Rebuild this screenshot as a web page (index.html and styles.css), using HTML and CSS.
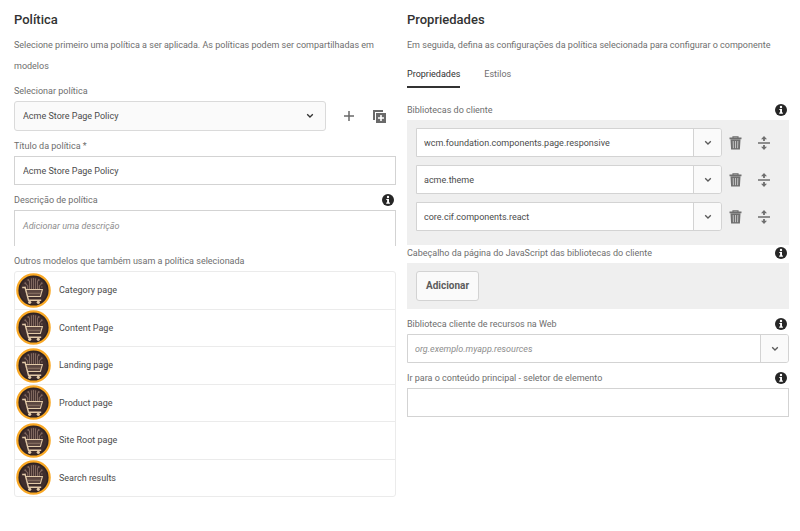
FILE: index.html
```html
<!DOCTYPE html>
<html lang="pt-BR">
<head>
<meta charset="utf-8">
<meta name="viewport" content="width=device-width, initial-scale=1">
<title>Política</title>
<link rel="stylesheet" href="styles.css">
</head>
<body>
<svg class="sprite" aria-hidden="true">
  <symbol id="chevron" viewBox="0 0 8 6"><path d="M1.200 1.200 4 4l2.800-2.800" fill="none" stroke="currentColor" stroke-width="1.300"/></symbol>
  <symbol id="info" viewBox="0 0 12 12"><circle cx="6" cy="6" r="6" fill="#262626"/><circle cx="6" cy="3" r="1.200" fill="#fff"/><path d="M4.300 4.900h2.700v3.600h.9v1.200H4.200V8.500h.9V6.100h-.8z" fill="#fff"/></symbol>
  <symbol id="plus" viewBox="0 0 10 10"><path d="M5 0v10M0 5h10" stroke="currentColor" stroke-width="1.500"/></symbol>
  <symbol id="duplicate" viewBox="0 0 13 13"><path d="M0 0h10v2H2v8H0z" fill="currentColor"/><path d="M3 3h10v10H3z" fill="currentColor"/><path d="M8 5v6M5 8h6" stroke="#fff" stroke-width="1.600"/></symbol>
  <symbol id="trash" viewBox="0 0 13 14"><path d="M4 2V.8h5V2" fill="none" stroke="currentColor" stroke-width="1.200"/><path d="M.5 1.600h12v1.600H.5zM1.500 3.600h10l-.6 10H2.100z" fill="currentColor"/><path d="M4.200 5l.2 7.200M6.500 5v7.200M8.800 5l-.2 7.200" stroke="#d8d8d8" stroke-width=".8"/></symbol>
  <symbol id="move" viewBox="0 0 12 14"><path d="M0 6.200h12v1.600H0zM6 0l3 3.200H6.900V5H5.100V3.200H3zM6 14l3-3.200H6.900V9H5.100v1.800H3z" fill="currentColor"/></symbol>
  <symbol id="cart" viewBox="0 0 35 35">
    <circle cx="17.500" cy="17.500" r="16.200" fill="#2f2324" stroke="#f9a825" stroke-width="2.200"/>
    <circle cx="17.500" cy="17.500" r="13.500" fill="#3e2d2c"/>
    <g fill="none" stroke="#80685f" stroke-width="1.100">
      <path d="M17.500 16V5M15.500 16V6M19.500 16V6M13.500 16V8.500l-1-1.500M21.500 16V8.500l1-1.500M11.700 16v-3L9.500 10.500M23.300 16v-3l2.200-2.500M10 14H8.500M25 14h1.500"/>
    </g>
    <g fill="#80685f"><circle cx="12.300" cy="7" r="1"/><circle cx="22.700" cy="7" r="1"/><circle cx="9.300" cy="10.300" r="1"/><circle cx="25.700" cy="10.300" r="1"/><circle cx="15.500" cy="6" r=".8"/><circle cx="19.500" cy="6" r=".8"/></g>
    <path d="M10 16.500h16l-1.800 6.500H11.600z" fill="#5b4640"/>
    <path d="M6.200 14.500h2.900l3.400 12.700h12.700" fill="none" stroke="#e3caa8" stroke-width="1.400"/>
    <path d="M9.800 16.500h16.600l-2 7H11.700" fill="none" stroke="#e3caa8" stroke-width="1.100"/>
    <path d="M10.800 20.300h14.400" stroke="#8d7465" stroke-width="1"/>
    <circle cx="13.700" cy="29.300" r="1.600" fill="#e3caa8"/><circle cx="22.300" cy="29.300" r="1.600" fill="#e3caa8"/>
  </symbol>
</svg>
<main class="editor">
  <section class="column">
    <h2>Política</h2>
    <p class="intro">Selecione primeiro uma política a ser aplicada. As políticas podem ser compartilhadas em modelos</p>
    <div class="field">
      <div class="field-head"><label for="policy">Selecionar política</label></div>
      <div class="policy-row">
        <div class="select-wrap">
          <select id="policy"><option>Acme Store Page Policy</option></select>
          <svg class="chevron"><use href="#chevron"/></svg>
        </div>
        <button type="button" class="icon-button" aria-label="Criar"><svg class="plus"><use href="#plus"/></svg></button>
        <button type="button" class="icon-button" aria-label="Duplicar"><svg class="duplicate"><use href="#duplicate"/></svg></button>
      </div>
    </div>
    <div class="field">
      <div class="field-head"><label for="title">Título da política *</label></div>
      <input class="control" id="title" type="text" value="Acme Store Page Policy">
    </div>
    <div class="field">
      <div class="field-head"><label for="description">Descrição de política</label><svg class="info"><use href="#info"/></svg></div>
      <textarea class="control description" id="description" placeholder="Adicionar uma descrição"></textarea>
    </div>
    <div class="field">
      <div class="field-head"><span>Outros modelos que também usam a política selecionada</span></div>
      <ul class="templates">
        <li><svg class="cart"><use href="#cart"/></svg>Category page</li>
        <li><svg class="cart"><use href="#cart"/></svg>Content Page</li>
        <li><svg class="cart"><use href="#cart"/></svg>Landing page</li>
        <li><svg class="cart"><use href="#cart"/></svg>Product page</li>
        <li><svg class="cart"><use href="#cart"/></svg>Site Root page</li>
        <li><svg class="cart"><use href="#cart"/></svg>Search results</li>
      </ul>
    </div>
  </section>
  <section class="column">
    <h2>Propriedades</h2>
    <p class="intro">Em seguida, defina as configurações da política selecionada para configurar o componente</p>
    <div class="tabs" role="tablist">
      <button type="button" role="tab" aria-selected="true">Propriedades</button>
      <button type="button" role="tab" aria-selected="false">Estilos</button>
    </div>
    <div class="field libraries">
      <div class="field-head"><label for="lib1">Bibliotecas do cliente</label><svg class="info"><use href="#info"/></svg></div>
      <div class="panel library-list">
        <div class="library">
          <div class="combo"><input id="lib1" type="text" value="wcm.foundation.components.page.responsive"><button type="button" aria-label="Abrir"><svg class="chevron"><use href="#chevron"/></svg></button></div>
          <button type="button" class="trash-button" aria-label="Excluir"><svg class="trash"><use href="#trash"/></svg></button>
          <button type="button" class="move-button" aria-label="Mover"><svg class="move"><use href="#move"/></svg></button>
        </div>
        <div class="library">
          <div class="combo"><input aria-label="Biblioteca 2" type="text" value="acme.theme"><button type="button" aria-label="Abrir"><svg class="chevron"><use href="#chevron"/></svg></button></div>
          <button type="button" class="trash-button" aria-label="Excluir"><svg class="trash"><use href="#trash"/></svg></button>
          <button type="button" class="move-button" aria-label="Mover"><svg class="move"><use href="#move"/></svg></button>
        </div>
        <div class="library">
          <div class="combo"><input aria-label="Biblioteca 3" type="text" value="core.cif.components.react"><button type="button" aria-label="Abrir"><svg class="chevron"><use href="#chevron"/></svg></button></div>
          <button type="button" class="trash-button" aria-label="Excluir"><svg class="trash"><use href="#trash"/></svg></button>
          <button type="button" class="move-button" aria-label="Mover"><svg class="move"><use href="#move"/></svg></button>
        </div>
      </div>
    </div>
    <div class="field head-libraries">
      <div class="field-head"><span>Cabeçalho da página do JavaScript das bibliotecas do cliente</span><svg class="info"><use href="#info"/></svg></div>
      <div class="panel"><button type="button" class="add">Adicionar</button></div>
    </div>
    <div class="field">
      <div class="field-head"><label for="resources">Biblioteca cliente de recursos na Web</label><svg class="info"><use href="#info"/></svg></div>
      <div class="combo"><input id="resources" type="text" placeholder="org.exemplo.myapp.resources"><button type="button" aria-label="Abrir"><svg class="chevron"><use href="#chevron"/></svg></button></div>
    </div>
    <div class="field">
      <div class="field-head"><label for="skip">Ir para o conteúdo principal - seletor de elemento</label><svg class="info"><use href="#info"/></svg></div>
      <input class="control" id="skip" type="text">
    </div>
  </section>
</main>
</body>
</html>
```
FILE: styles.css
```css
* { box-sizing: border-box; }

body {
  margin: 0;
  background: #fff;
  color: #6e6e6e;
  font: 9px/14px Roboto, "Liberation Sans", sans-serif;
}

button, input, select, textarea { margin: 0; font: inherit; color: #4b4b4b; }
button { padding: 0; border: 0; background: none; display: flex; align-items: center; justify-content: center; }
svg { display: block; flex: none; }

.sprite { position: absolute; width: 0; height: 0; }

.editor {
  display: grid;
  grid-template-columns: minmax(0, 1fr) minmax(0, 1fr);
  gap: 11px;
  padding: 10px 11px 16px 14px;
}

h2 { margin: 0; font-size: 13px; line-height: 20px; font-weight: 500; color: #323232; }
.intro { margin: 5px 0 0; line-height: 21px; }
.intro + .field { margin-top: 7px; }

.field { margin-top: 8px; }
.field-head { display: flex; align-items: center; justify-content: space-between; height: 14px; margin-bottom: 3px; padding-right: 2px; }

.info { width: 12px; height: 12px; }
.chevron { width: 8px; height: 6px; color: #5a5a5a; }

.control { display: block; width: 100%; height: 29px; padding: 0 8px; border: 1px solid #d3d3d3; border-radius: 0; background: #fff; }
.description { height: 36px; padding: 8px; border-bottom: 0; resize: none; overflow: hidden; }
::placeholder { color: #8e8e8e; font-style: italic; opacity: 1; }

.policy-row { display: flex; padding-right: 2px; }
.select-wrap { position: relative; flex: 1; margin-right: 8px; }
.select-wrap select { display: block; width: 100%; height: 30px; padding: 0 8px; border: 1px solid #dadada; border-radius: 3px; background: #fafafa; appearance: none; }
.select-wrap .chevron { position: absolute; right: 12px; top: 12px; pointer-events: none; color: #323232; }
.icon-button { width: 30px; height: 30px; color: #6a6a6a; }
.plus { width: 10px; height: 10px; }
.duplicate { width: 13px; height: 13px; }

.templates { display: flex; flex-direction: column; min-height: 226px; margin: 0; padding: 0; border: 1px solid #ebebeb; border-radius: 3px; list-style: none; color: #4b4b4b; }
.templates li { display: flex; flex: 1; align-items: center; gap: 8px; padding-left: 1px; }
.templates li + li { border-top: 1px solid #ebebeb; }
.cart { width: 35px; height: 35px; }

.tabs { display: flex; gap: 24px; margin-top: 11px; }
.tabs button { height: 21px; align-items: flex-start; border-bottom: 2px solid transparent; color: #6e6e6e; }
.tabs button[aria-selected="true"] { border-color: #323232; color: #323232; }

.libraries { margin-top: 15px; }
.panel { padding: 8px 9px; background: #efefef; }
.library-list { display: grid; gap: 8px; padding-bottom: 14px; }
.library { display: flex; }

.combo { display: flex; flex: 1; height: 29px; border: 1px solid #d3d3d3; border-radius: 0 3px 3px 0; background: #fff; }
.combo input { flex: 1; min-width: 0; padding: 0 7px; border: 0; background: none; }
.combo button { width: 28px; border-left: 1px solid #d3d3d3; border-radius: 0 2px 2px 0; background: #fafafa; }
.trash-button { width: 26px; color: #6e6e6e; }
.move-button { width: 32px; color: #6e6e6e; }
.trash { width: 13px; height: 14px; }
.move { width: 12px; height: 14px; }

.head-libraries { margin-top: 1px; }
.add { height: 30px; padding: 0 9px; border: 1px solid #d3d3d3; border-radius: 3px; background: #fafafa; font-size: 10px; font-weight: 700; color: #5c5c5c; }
```
